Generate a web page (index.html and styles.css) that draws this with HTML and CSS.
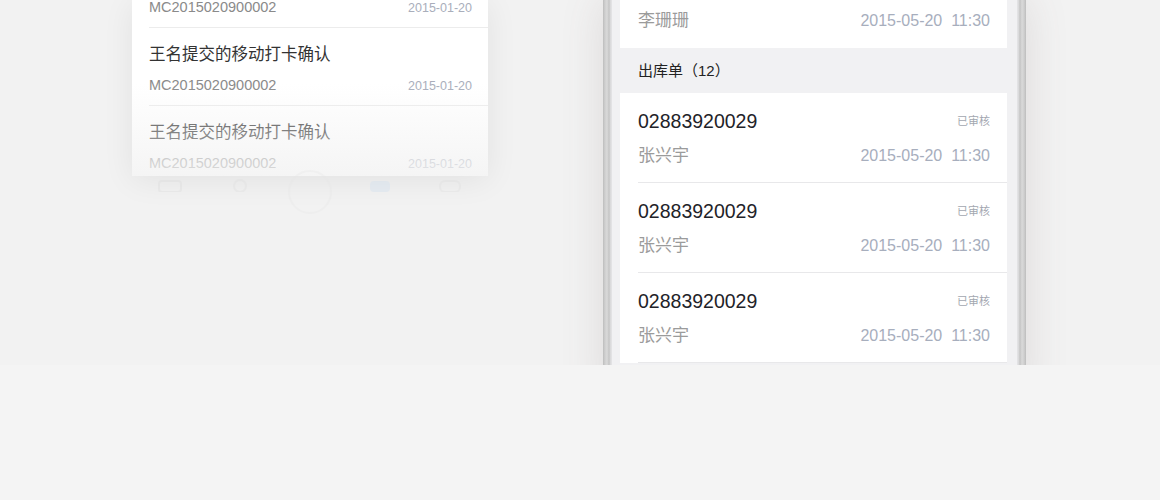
FILE: index.html
```html
<!DOCTYPE html>
<html lang="zh-CN">
<head>
  <meta charset="UTF-8" />
  <title>移动审批 - 列表</title>
  <meta name="viewport" content="width=device-width, initial-scale=1.0" />
  <link rel="stylesheet" href="styles.css">
</head>
<body>
  <div class="stage">
    <div class="left">
      <div class="card">
        <ul class="msgs">
          <li class="msg">
            <div class="msg-title">王名提交的移动打卡确认</div>
            <div class="msg-meta"><span class="msg-no">MC2015020900002</span><span class="msg-date">2015-01-20</span></div>
          </li>
          <li class="msg">
            <div class="msg-title">王名提交的移动打卡确认</div>
            <div class="msg-meta"><span class="msg-no">MC2015020900002</span><span class="msg-date">2015-01-20</span></div>
          </li>
          <li class="msg">
            <div class="msg-title">王名提交的移动打卡确认</div>
            <div class="msg-meta"><span class="msg-no">MC2015020900002</span><span class="msg-date">2015-01-20</span></div>
          </li>
        </ul>
        <div class="fade"></div>
      </div>
      <div class="tabbar">
        <span class="tab"><svg width="26" height="14" viewBox="0 0 26 14"><rect x="2" y="3" width="22" height="11" rx="3" fill="none" stroke="#d8d8d8" stroke-width="2"/></svg></span>
        <span class="tab"><svg width="16" height="14" viewBox="0 0 16 14"><circle cx="8" cy="8" r="6" fill="none" stroke="#dcdcdc" stroke-width="2"/></svg></span>
        <span class="tab tab-main"><span class="tab-ring"></span></span>
        <span class="tab"><svg width="22" height="14" viewBox="0 0 22 14"><rect x="1" y="3" width="20" height="11" rx="4" fill="#c9dcf0"/></svg></span>
        <span class="tab"><svg width="24" height="14" viewBox="0 0 24 14"><rect x="2" y="3" width="20" height="11" rx="5" fill="none" stroke="#dcdcdc" stroke-width="2"/></svg></span>
      </div>
    </div>

    <div class="phone">
      <div class="screen">
        <div class="order cut">
          <div class="order-body">
            <div class="order-top"><span class="order-no">02883920028</span><span class="order-state">已审核</span></div>
            <div class="order-bottom"><span class="order-name">李珊珊</span><span class="order-time">2015-05-20  11:30</span></div>
          </div>
        </div>

        <div class="group-head">出库单（12）</div>

        <div class="order">
          <div class="order-body">
            <div class="order-top"><span class="order-no">02883920029</span><span class="order-state">已审核</span></div>
            <div class="order-bottom"><span class="order-name">张兴宇</span><span class="order-time">2015-05-20  11:30</span></div>
          </div>
        </div>
        <div class="order">
          <div class="order-body">
            <div class="order-top"><span class="order-no">02883920029</span><span class="order-state">已审核</span></div>
            <div class="order-bottom"><span class="order-name">张兴宇</span><span class="order-time">2015-05-20  11:30</span></div>
          </div>
        </div>
        <div class="order">
          <div class="order-body">
            <div class="order-top"><span class="order-no">02883920029</span><span class="order-state">已审核</span></div>
            <div class="order-bottom"><span class="order-name">张兴宇</span><span class="order-time">2015-05-20  11:30</span></div>
          </div>
        </div>
      </div>
    </div>
  </div>

  <div class="floor"></div>
</body>
</html>
```

FILE: styles.css
```css
* {
  box-sizing: border-box;
}

body {
  margin: 0;
  padding: 0;
  font-family: "Liberation Sans", "Noto Sans CJK SC", sans-serif;
  background: #f4f4f4;
  overflow: hidden;
}

.stage {
  height: 365px;
  overflow: hidden;
  display: flex;
  align-items: flex-start;
  background: #f2f2f2;
}

/* left mockup: floating list card */
.left {
  margin-left: 132px;
  width: 356px;
  display: flex;
  flex-direction: column;
}

.card {
  position: relative;
  height: 176px;
  overflow: hidden;
  background: #fff;
  box-shadow: 0 4px 30px rgba(0,0,0,0.07);
}

.msgs {
  list-style: none;
  margin: -50px 0 0;
  padding: 0;
}

.msg {
  margin-left: 17px;
  padding: 14px 16px 9px 0;
  border-bottom: 1px solid #ececec;
}

.msg-title {
  font-size: 16.5px;
  line-height: 24px;
  color: #333;
}

.msg-meta {
  display: flex;
  justify-content: space-between;
  align-items: baseline;
  margin-top: 9px;
  line-height: 20px;
}

.msg-no {
  font-size: 14.5px;
  color: #8a8a8a;
}

.msg-date {
  font-size: 12.5px;
  color: #a9aebb;
}

.fade {
  position: absolute;
  left: 0;
  right: 0;
  bottom: 0;
  height: 92px;
  background: linear-gradient(rgba(242,242,242,0), rgba(242,242,242,0.8));
}

.tabbar {
  display: flex;
  padding: 0 3px;
  height: 30px;
  opacity: 0.3;
}

.tab {
  flex: 1;
  display: flex;
  justify-content: center;
  align-items: flex-start;
  padding-top: 2px;
}

.tab-main {
  position: relative;
}

.tab-ring {
  position: absolute;
  top: -6px;
  width: 44px;
  height: 44px;
  border-radius: 50%;
  border: 2px solid #e6e6e6;
}

/* right mockup: phone */
.phone {
  margin-left: 115px;
  width: 423px;
  height: 400px;
  padding: 0 9px;
  background:
    linear-gradient(to right, #bdbdbd 0, #cfcfcf 2px, #dadada 4px, #c4c4c4 6px, #e2e2e4 8px) left / 9px 100% no-repeat,
    linear-gradient(to left, #bdbdbd 0, #cfcfcf 2px, #dadada 4px, #c4c4c4 6px, #e2e2e4 8px) right / 9px 100% no-repeat,
    #f1f1f3;
  box-shadow: 0 0 40px rgba(110,90,90,0.15);
}

.screen {
  height: 100%;
  padding: 0 10px 0 8px;
  background: #f1f1f3;
}

.order {
  background: #fff;
  padding-left: 18px;
}

.order.cut {
  margin-top: -42px;
}

.order-body {
  padding: 16px 17px 14px 0;
  border-bottom: 1px solid #e8e8ea;
}

.order.cut .order-body {
  border-bottom: none;
  padding-bottom: 15px;
}

.order-top {
  display: flex;
  justify-content: space-between;
  align-items: center;
  line-height: 24px;
}

.order-no {
  font-size: 19.5px;
  color: #1f2329;
}

.order-state {
  font-size: 11px;
  color: #a3a7b0;
}

.order-bottom {
  display: flex;
  justify-content: space-between;
  align-items: center;
  margin-top: 11px;
  line-height: 24px;
}

.order-name {
  font-size: 17px;
  color: #9b9b9b;
}

.order-time {
  font-size: 16px;
  color: #a7aebd;
  white-space: pre;
}

.group-head {
  height: 45px;
  line-height: 45px;
  padding-left: 18px;
  font-size: 15px;
  color: #222;
}

.floor {
  height: 135px;
  background: #f4f4f4;
}
```
